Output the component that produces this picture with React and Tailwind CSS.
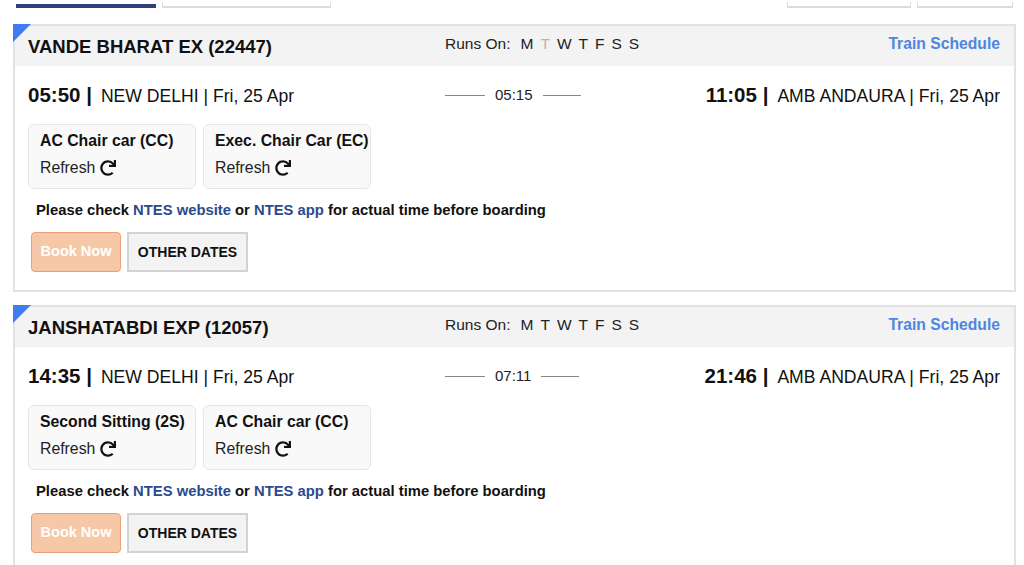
import React from "react";
import { FaRedo } from "react-icons/fa";

const trains = [
  {
    name: "VANDE BHARAT EX (22447)",
    offDays: [1],
    dep: "05:50",
    from: "NEW DELHI",
    arr: "11:05",
    to: "AMB ANDAURA",
    date: "Fri, 25 Apr",
    duration: "05:15",
    classes: ["AC Chair car (CC)", "Exec. Chair Car (EC)"],
  },
  {
    name: "JANSHATABDI EXP (12057)",
    offDays: [],
    dep: "14:35",
    from: "NEW DELHI",
    arr: "21:46",
    to: "AMB ANDAURA",
    date: "Fri, 25 Apr",
    duration: "07:11",
    classes: ["Second Sitting (2S)", "AC Chair car (CC)"],
  },
];

const days = ["M", "T", "W", "T", "F", "S", "S"];

function TrainCard({ train }) {
  return (
    <div className="relative border-2 border-[#e2e2e2] bg-white">
      {/* corner flag */}
      <div className="absolute -top-[2px] -left-[2px] w-0 h-0 border-t-[18px] border-r-[18px] border-t-[#3f7cf2] border-r-transparent"></div>

      {/* Header */}
      <div className="flex items-center h-[40px] bg-[#f3f3f3] pl-[13px] pr-[14px]">
        <div className="w-[417px] text-[18.5px] font-bold text-[#111] pt-[1px]">{train.name}</div>
        <div className="flex items-center text-[15.5px] text-[#222] -mt-[4px]">
          <span className="mr-[10px]">Runs On:</span>
          <div className="flex gap-[7px]">
            {days.map((d, i) => (
              <span key={i} className={train.offDays.includes(i) ? "text-[#b5b5b5]" : "text-[#222]"}>
                {d}
              </span>
            ))}
          </div>
        </div>
        <a className="ml-auto text-[15.7px] font-bold text-[#4d86e2] -mt-[5px]">Train Schedule</a>
      </div>

      {/* Times */}
      <div className="flex items-center pl-[13px] pr-[14px] h-[58px] text-[#111]">
        <div className="w-[417px] flex items-baseline">
          <span className="text-[20.5px] font-bold">{train.dep} |</span>
          <span className="text-[17.6px] ml-[9px]">{train.from} | {train.date}</span>
        </div>
        <div className="flex items-center gap-[10px] text-[15px] text-[#222]">
          <span className="w-[40px] h-px bg-[#888]"></span>
          <span>{train.duration}</span>
          <span className="w-[38px] h-px bg-[#888]"></span>
        </div>
        <div className="ml-auto flex items-baseline">
          <span className="text-[20.5px] font-bold">{train.arr} |</span>
          <span className="text-[17.6px] ml-[9px]">{train.to} | {train.date}</span>
        </div>
      </div>

      {/* Classes */}
      <div className="flex gap-[7px] pl-[13px]">
        {train.classes.map((c) => (
          <div
            key={c}
            className="w-[168px] h-[65px] rounded-[6px] border border-[#e6e6e6] bg-[#f9f9f9] pl-[11px] pt-[5px]"
          >
            <div className="text-[15.8px] font-bold text-[#111] leading-[22px]">{c}</div>
            <div className="flex items-center gap-[5px] text-[15.8px] text-[#222] mt-[4px]">
              Refresh <FaRedo className="text-[16px] text-[#111]" />
            </div>
          </div>
        ))}
      </div>

      {/* Note */}
      <div className="pl-[21px] mt-[11px] text-[14.8px] leading-[20px] font-bold text-[#111]">
        Please check <a className="text-[#2b4a8e]">NTES website</a> or{" "}
        <a className="text-[#2b4a8e]">NTES app</a> for actual time before boarding
      </div>

      {/* Buttons */}
      <div className="flex gap-[6px] pl-[16px] mt-[12px] pb-[18px]">
        <button className="w-[90px] h-[40px] rounded-[4px] border border-[#eaa072] bg-[#f6c8a7] text-white font-bold text-[14.5px]">
          Book Now
        </button>
        <button className="w-[121px] h-[40px] px-0 border-2 border-[#d2d2d2] bg-[#f3f3f3] text-[#111] font-bold text-[14px] whitespace-nowrap">
          OTHER DATES
        </button>
      </div>
    </div>
  );
}

export default function App() {
  return (
    <div className="w-[1024px] h-[565px] overflow-hidden bg-white font-['Liberation_Sans',Arial,sans-serif]">
      {/* Tabs row (scrolled mostly out of view) */}
      <div className="flex items-end h-[8px] overflow-hidden">
        <div className="ml-[16px] w-[140px] h-[4px] bg-[#2e3f7c]"></div>
        <div className="ml-[6px] w-[169px] h-[6px] border-b-2 border-x border-[#dcdcdc]"></div>
        <div className="ml-auto w-[124px] h-[6px] border-b-2 border-x border-[#dcdcdc]"></div>
        <div className="ml-[6px] mr-[11px] w-[96px] h-[6px] border-b-2 border-x border-[#dcdcdc]"></div>
      </div>

      <div className="pl-[13px] pr-[8px] pt-[16px] flex flex-col gap-[13px]">
        {trains.map((t) => (
          <TrainCard key={t.name} train={t} />
        ))}
      </div>
    </div>
  );
}
